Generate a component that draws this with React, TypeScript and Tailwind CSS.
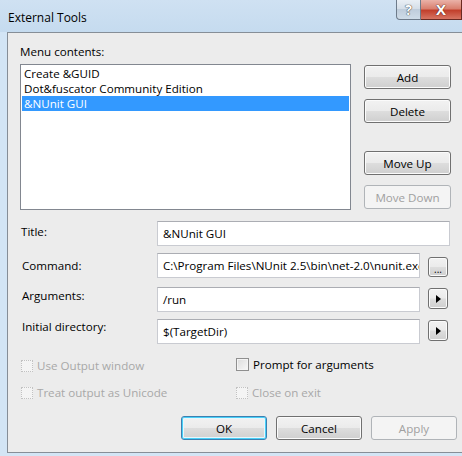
import { useState } from "react";

const btn =
  "flex items-center justify-center rounded-[3px] border border-[#707070] bg-[linear-gradient(#f2f2f2_0%,#ebebeb_48%,#dddddd_52%,#cfcfcf_100%)] shadow-[inset_0_0_0_1px_#fbfbfb] text-black";
const btnDisabled =
  "flex items-center justify-center rounded-[3px] border border-[#b0b4b8] bg-[#f4f4f4] text-[#a0a0a0]";
const field =
  "h-[25px] bg-white border border-[#c9cbd1] border-t-[#abadb3] pl-[5px] flex items-center whitespace-nowrap overflow-hidden";

function Checkbox({ label, disabled }: { label: string; disabled?: boolean }) {
  return (
    <div className="flex items-center h-[15px]">
      <span
        className={
          disabled
            ? "w-[12px] h-[12px] border border-dotted border-[#c2c2c2] bg-[#f4f4f4]"
            : "w-[13px] h-[13px] border border-[#8f8f8f] bg-[linear-gradient(135deg,#dcdcdc,#f8f8f8)] shadow-[inset_0_0_0_1px_#f4f4f4]"
        }
      />
      <span className={"ml-[4px] " + (disabled ? "text-[#a8a8a8]" : "text-black")}>{label}</span>
    </div>
  );
}

export default function App() {
  const items = ["Create &GUID", "Dot&fuscator Community Edition", "&NUnit GUI"];
  const [selected, setSelected] = useState(2);

  return (
    <div className="w-[462px] h-[456px] overflow-hidden flex flex-col bg-[#d3e5f5] font-['Open_Sans',sans-serif] text-[11.6px] leading-[15px] text-black">
      {/* title bar */}
      <div className="h-[32px] flex items-start bg-[linear-gradient(180deg,#cfe1f2,#c5dbef)]">
        <div className="pl-[8px] pt-[10px] text-[12px]">External Tools</div>
        <div className="ml-auto flex">
          <div className="w-[25px] h-[20px] rounded-bl-[4px] border border-t-0 border-[#6d7b8a] bg-[linear-gradient(#e9eff5_0%,#d3dde7_50%,#bfcddb_50%,#cfdce8_100%)] flex items-center justify-center text-white font-bold text-[14px] [text-shadow:0_0_1px_#333,0_0_1px_#333]">
            ?
          </div>
          <div className="w-[41px] h-[20px] border border-t-0 border-l-0 border-[#6b2a22] bg-[linear-gradient(#eab2a8_0%,#d9806f_45%,#c2402c_55%,#d77563_100%)] flex items-center justify-center text-white font-bold text-[15px] [text-shadow:0_0_1px_#4a1a12,0_0_1px_#4a1a12]">
            X
          </div>
        </div>
      </div>

      {/* client area */}
      <div className="flex-1 flex pl-[7px] pb-[3px]">
        <div className="flex-1 flex flex-col border-l border-t border-b border-[#868e97] bg-[#ececec] pl-[12px] pt-[11px]">
          <div className="h-[15px]">Menu contents:</div>

          <div className="flex mt-[5px]">
            <div className="w-[331px] h-[146px] bg-white border border-[#828790] p-[1px]">
              {items.map((it, i) => (
                <div
                  key={it}
                  onClick={() => setSelected(i)}
                  className={
                    "h-[15px] pl-[2px] whitespace-nowrap " +
                    (selected === i ? "bg-[#3399ff] text-white" : "text-black")
                  }
                >
                  {it}
                </div>
              ))}
            </div>
            <div className="ml-[13px] w-[87px] flex flex-col">
              <div className={btn + " h-[24px] mt-[1px]"}>Add</div>
              <div className={btn + " h-[24px] mt-[10px]"}>Delete</div>
              <div className={btn + " h-[24px] mt-[28px]"}>Move Up</div>
              <div className={btnDisabled + " h-[24px] mt-[10px]"}>Move Down</div>
            </div>
          </div>

          {/* fields */}
          <div className="flex items-start mt-[11px]">
            <div className="w-[137px] pl-[1px] pt-[3px]">Title:</div>
            <div className={field + " w-[293px]"}>&amp;NUnit GUI</div>
          </div>
          <div className="flex items-start mt-[7px]">
            <div className="w-[137px] pl-[2px] pt-[5px]">Command:</div>
            <div className={field + " w-[263px]"}>C:\Program Files\NUnit 2.5\bin\net-2.0\nunit.exe</div>
            <div className={btn + " ml-[8px] mt-[4px] w-[20px] h-[20px] items-end pb-[3px] leading-[8px] text-[10px]"}>...</div>
          </div>
          <div className="flex items-start mt-[9px]">
            <div className="w-[137px] pl-[2px] pt-[1px]">Arguments:</div>
            <div className={field + " w-[263px]"}>/run</div>
            <div className={btn + " ml-[8px] mt-[1px] w-[20px] h-[21px]"}>
              <svg width="5" height="8" viewBox="0 0 5 8">
                <path d="M0 0 L5 4 L0 8 Z" fill="#000" />
              </svg>
            </div>
          </div>
          <div className="flex items-start mt-[7px]">
            <div className="w-[137px] pl-[2px]">Initial directory:</div>
            <div className={field + " w-[263px]"}>$(TargetDir)</div>
            <div className={btn + " ml-[8px] mt-[1px] w-[20px] h-[21px]"}>
              <svg width="5" height="8" viewBox="0 0 5 8">
                <path d="M0 0 L5 4 L0 8 Z" fill="#000" />
              </svg>
            </div>
          </div>

          {/* options */}
          <div className="grid grid-cols-[215px_1fr] mt-[14px] pl-[1px] gap-y-[12px]">
            <Checkbox label="Use Output window" disabled />
            <div className="-mt-[1px]">
              <Checkbox label="Prompt for arguments" />
            </div>
            <Checkbox label="Treat output as Unicode" disabled />
            <Checkbox label="Close on exit" disabled />
          </div>

          {/* dialog buttons */}
          <div className="flex gap-[9px] ml-[161px] mt-[16px]">
            <div className="w-[86px] h-[24px] flex items-center justify-center rounded-[3px] border border-[#3c7fb1] bg-[linear-gradient(#f2f2f2_0%,#ebebeb_48%,#dddddd_52%,#cfcfcf_100%)] shadow-[inset_0_0_0_1px_#48d0f8,inset_0_0_0_2px_#e8f6fc]">
              OK
            </div>
            <div className={btn + " w-[86px] h-[24px]"}>Cancel</div>
            <div className={btnDisabled + " w-[86px] h-[24px]"}>Apply</div>
          </div>
        </div>
      </div>
    </div>
  );
}
